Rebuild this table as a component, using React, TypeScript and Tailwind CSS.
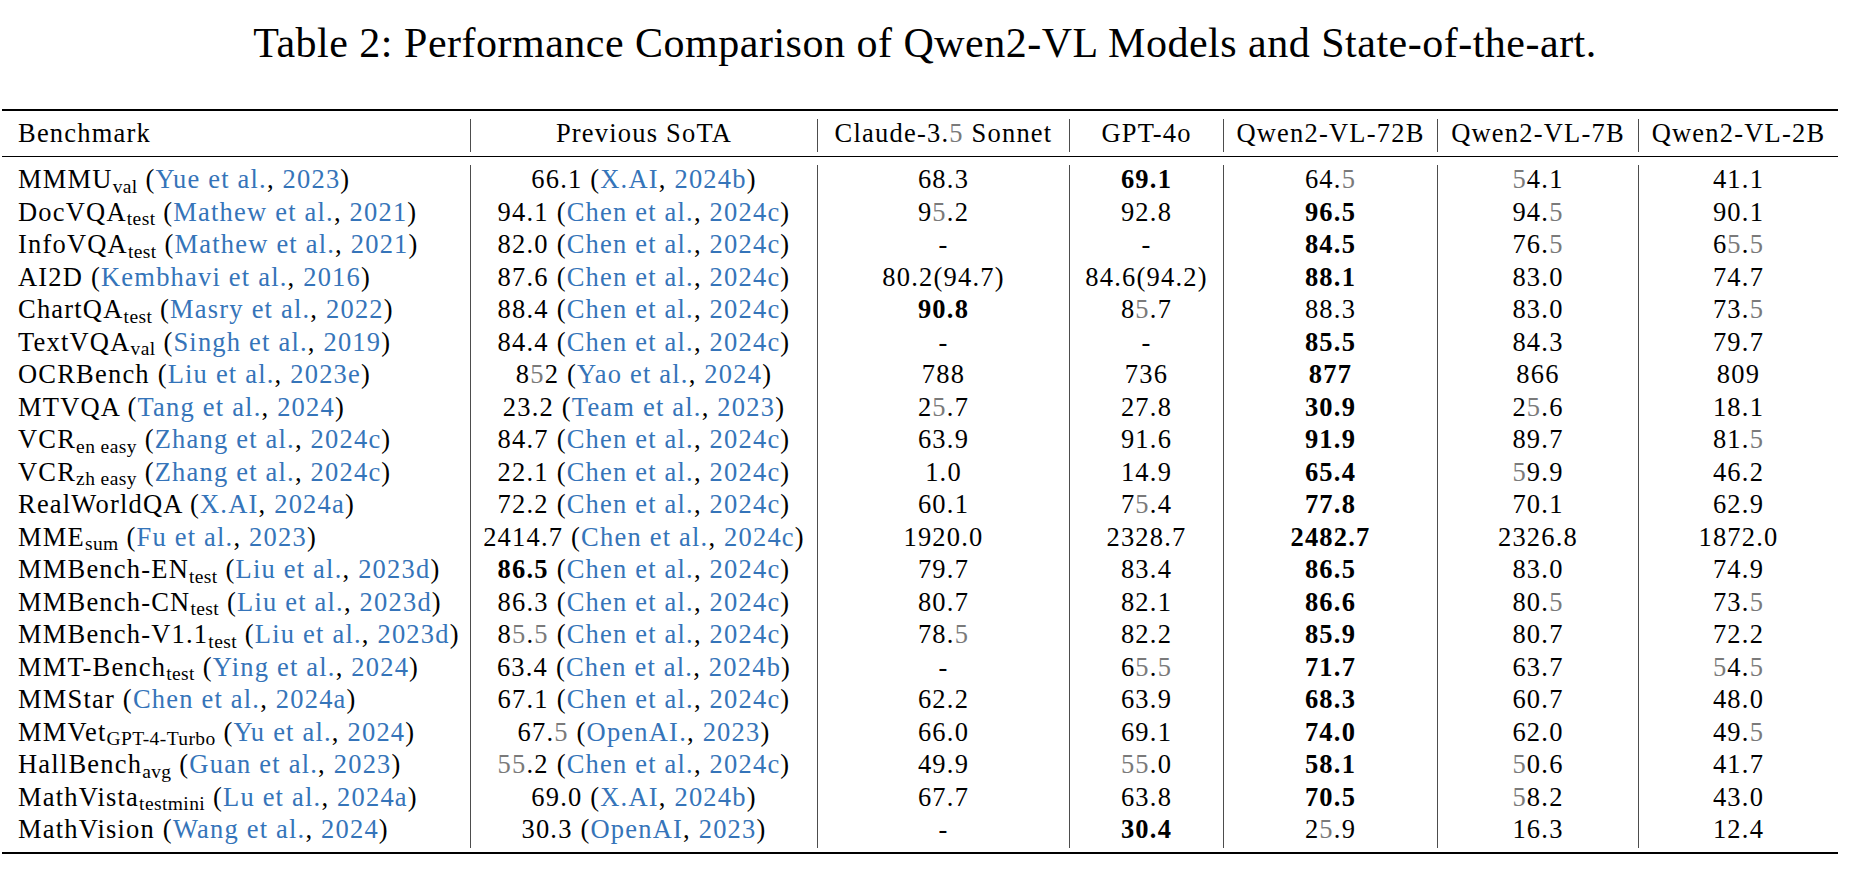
type Row = {
  name: string;
  sub?: string;
  cite: [string, string];
  sota: string;
  sotaBold?: boolean;
  sotaCite: [string, string];
  vals: string[];
  best: number;
};

const rows: Row[] = [
  { name: "MMMU", sub: "val", cite: ["Yue et al.", "2023"], sota: "66.1", sotaCite: ["X.AI", "2024b"], vals: ["68.3", "69.1", "64.5", "54.1", "41.1"], best: 1 },
  { name: "DocVQA", sub: "test", cite: ["Mathew et al.", "2021"], sota: "94.1", sotaCite: ["Chen et al.", "2024c"], vals: ["95.2", "92.8", "96.5", "94.5", "90.1"], best: 2 },
  { name: "InfoVQA", sub: "test", cite: ["Mathew et al.", "2021"], sota: "82.0", sotaCite: ["Chen et al.", "2024c"], vals: ["-", "-", "84.5", "76.5", "65.5"], best: 2 },
  { name: "AI2D", cite: ["Kembhavi et al.", "2016"], sota: "87.6", sotaCite: ["Chen et al.", "2024c"], vals: ["80.2(94.7)", "84.6(94.2)", "88.1", "83.0", "74.7"], best: 2 },
  { name: "ChartQA", sub: "test", cite: ["Masry et al.", "2022"], sota: "88.4", sotaCite: ["Chen et al.", "2024c"], vals: ["90.8", "85.7", "88.3", "83.0", "73.5"], best: 0 },
  { name: "TextVQA", sub: "val", cite: ["Singh et al.", "2019"], sota: "84.4", sotaCite: ["Chen et al.", "2024c"], vals: ["-", "-", "85.5", "84.3", "79.7"], best: 2 },
  { name: "OCRBench", cite: ["Liu et al.", "2023e"], sota: "852", sotaCite: ["Yao et al.", "2024"], vals: ["788", "736", "877", "866", "809"], best: 2 },
  { name: "MTVQA", cite: ["Tang et al.", "2024"], sota: "23.2", sotaCite: ["Team et al.", "2023"], vals: ["25.7", "27.8", "30.9", "25.6", "18.1"], best: 2 },
  { name: "VCR", sub: "en easy", cite: ["Zhang et al.", "2024c"], sota: "84.7", sotaCite: ["Chen et al.", "2024c"], vals: ["63.9", "91.6", "91.9", "89.7", "81.5"], best: 2 },
  { name: "VCR", sub: "zh easy", cite: ["Zhang et al.", "2024c"], sota: "22.1", sotaCite: ["Chen et al.", "2024c"], vals: ["1.0", "14.9", "65.4", "59.9", "46.2"], best: 2 },
  { name: "RealWorldQA", cite: ["X.AI", "2024a"], sota: "72.2", sotaCite: ["Chen et al.", "2024c"], vals: ["60.1", "75.4", "77.8", "70.1", "62.9"], best: 2 },
  { name: "MME", sub: "sum", cite: ["Fu et al.", "2023"], sota: "2414.7", sotaCite: ["Chen et al.", "2024c"], vals: ["1920.0", "2328.7", "2482.7", "2326.8", "1872.0"], best: 2 },
  { name: "MMBench-EN", sub: "test", cite: ["Liu et al.", "2023d"], sota: "86.5", sotaBold: true, sotaCite: ["Chen et al.", "2024c"], vals: ["79.7", "83.4", "86.5", "83.0", "74.9"], best: 2 },
  { name: "MMBench-CN", sub: "test", cite: ["Liu et al.", "2023d"], sota: "86.3", sotaCite: ["Chen et al.", "2024c"], vals: ["80.7", "82.1", "86.6", "80.5", "73.5"], best: 2 },
  { name: "MMBench-V1.1", sub: "test", cite: ["Liu et al.", "2023d"], sota: "85.5", sotaCite: ["Chen et al.", "2024c"], vals: ["78.5", "82.2", "85.9", "80.7", "72.2"], best: 2 },
  { name: "MMT-Bench", sub: "test", cite: ["Ying et al.", "2024"], sota: "63.4", sotaCite: ["Chen et al.", "2024b"], vals: ["-", "65.5", "71.7", "63.7", "54.5"], best: 2 },
  { name: "MMStar", cite: ["Chen et al.", "2024a"], sota: "67.1", sotaCite: ["Chen et al.", "2024c"], vals: ["62.2", "63.9", "68.3", "60.7", "48.0"], best: 2 },
  { name: "MMVet", sub: "GPT-4-Turbo", cite: ["Yu et al.", "2024"], sota: "67.5", sotaCite: ["OpenAI.", "2023"], vals: ["66.0", "69.1", "74.0", "62.0", "49.5"], best: 2 },
  { name: "HallBench", sub: "avg", cite: ["Guan et al.", "2023"], sota: "55.2", sotaCite: ["Chen et al.", "2024c"], vals: ["49.9", "55.0", "58.1", "50.6", "41.7"], best: 2 },
  { name: "MathVista", sub: "testmini", cite: ["Lu et al.", "2024a"], sota: "69.0", sotaCite: ["X.AI", "2024b"], vals: ["67.7", "63.8", "70.5", "58.2", "43.0"], best: 2 },
  { name: "MathVision", cite: ["Wang et al.", "2024"], sota: "30.3", sotaCite: ["OpenAI", "2023"], vals: ["-", "30.4", "25.9", "16.3", "12.4"], best: 1 },
];

const headers = ["Benchmark", "Previous SoTA", "Claude-3.5 Sonnet", "GPT-4o", "Qwen2-VL-72B", "Qwen2-VL-7B", "Qwen2-VL-2B"];

// the "5" glyph renders lighter in the source pdf
function Plain({ text }: { text: string }) {
  return (
    <>
      {text.split("").map((ch, i) =>
        ch === "5" ? (
          <span key={i} className="text-[#7a7a7a]">5</span>
        ) : (
          <span key={i}>{ch}</span>
        )
      )}
    </>
  );
}

function Value({ text, bold }: { text: string; bold?: boolean }) {
  if (bold) return <span className="font-bold">{text}</span>;
  return <Plain text={text} />;
}

function Cite({ c }: { c: [string, string] }) {
  return (
    <>
      (<span className="text-[#3574b9]">{c[0]}</span>, <span className="text-[#3574b9]">{c[1]}</span>)
    </>
  );
}

const sep = "border-l border-[#4d4d4d] text-center";

export default function App() {
  return (
    <div
      className="w-[1850px] h-[878px] bg-white text-black overflow-hidden"
      style={{ fontFamily: '"Liberation Serif", "Times New Roman", serif' }}
    >
      <div className="h-[109px] pt-[22px] text-center text-[42px] leading-[42px] tracking-[0.5px]">
        Table 2: Performance Comparison of Qwen2-VL Models and State-of-the-art.
      </div>

      <div className="pl-[2px] w-[1838px] text-[26.5px] tracking-[1.2px] whitespace-nowrap">
        <div className="h-[2px] bg-black" />
        <div className="h-[8px]" />
        <div className="grid grid-cols-[468px_347px_252px_154px_214px_201px_200px] h-[33px] leading-[28px]">
          {headers.map((h, i) => (
            <div key={h} className={i === 0 ? "pl-4" : sep}>
              <Plain text={h} />
            </div>
          ))}
        </div>
        <div className="h-[4px]" />
        <div className="h-[1px] bg-black" />
        <div className="h-[8px]" />

        {rows.map((r, idx) => (
          <div
            key={idx}
            className="grid grid-cols-[468px_347px_252px_154px_214px_201px_200px] h-[32.5px] leading-[28px]"
          >
            <div className="pl-4">
              {r.name}
              {r.sub && <sub className="text-[19.5px] tracking-[0.4px]">{r.sub}</sub>} <Cite c={r.cite} />
            </div>
            <div className={sep}>
              <Value text={r.sota} bold={r.sotaBold} /> <Cite c={r.sotaCite} />
            </div>
            {r.vals.map((v, j) => (
              <div key={j} className={sep}>
                <Value text={v} bold={j === r.best} />
              </div>
            ))}
          </div>
        ))}

        <div className="h-[4px]" />
        <div className="h-[2px] bg-black" />
      </div>
    </div>
  );
}
